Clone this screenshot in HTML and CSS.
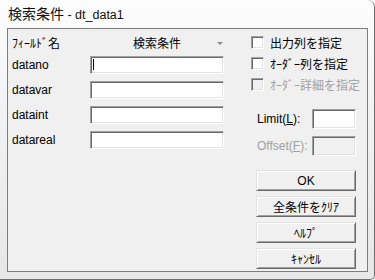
FILE: index.html
```html
<!DOCTYPE html>
<html>
<head>
  <title>検索条件</title>
  <link rel="stylesheet" href="styles.css">
</head>
<body>
  <div class="window">
    <div class="titlebar">検索条件<span class="title-sub"> - dt_data1</span></div>
    <div class="client">
      <div class="fields">
        <div class="fields-head">
          <span class="col-name">ﾌｨｰﾙﾄﾞ名</span>
          <span class="col-cond">検索条件</span>
          <span class="sort-arrow"></span>
        </div>
        <div class="field-row">
          <label>datano</label>
          <div class="edit"><span class="caret"></span></div>
        </div>
        <div class="field-row">
          <label>datavar</label>
          <div class="edit"></div>
        </div>
        <div class="field-row">
          <label>dataint</label>
          <div class="edit"></div>
        </div>
        <div class="field-row">
          <label>datareal</label>
          <div class="edit"></div>
        </div>
      </div>

      <div class="side">
        <div class="check-row">
          <span class="check"></span>出力列を指定
        </div>
        <div class="check-row">
          <span class="check"></span>ｵｰﾀﾞｰ列を指定
        </div>
        <div class="check-row disabled">
          <span class="check"></span>ｵｰﾀﾞｰ詳細を指定
        </div>

        <div class="num-row limit-row">
          <span class="num-label">Limit(<u>L</u>):</span>
          <div class="edit small"></div>
        </div>
        <div class="num-row disabled">
          <span class="num-label">Offset(<u>F</u>):</span>
          <div class="edit small"></div>
        </div>

        <div class="buttons">
          <button class="btn">OK</button>
          <button class="btn">全条件をｸﾘｱ</button>
          <button class="btn">ﾍﾙﾌﾟ</button>
          <button class="btn">ｷｬﾝｾﾙ</button>
        </div>
      </div>
    </div>
  </div>
</body>
</html>
```

FILE: styles.css
```css
body {
  margin: 0;
  font-family: "Liberation Sans", "Noto Sans CJK JP", sans-serif;
  font-size: 12px;
  color: #000;
  background: #fff;
}

.window {
  width: 375px;
  height: 280px;
  box-sizing: border-box;
  padding: 0 6px 7px 7px;
  background: linear-gradient(#fdfdfd, #f1f2f4 40%, #e6e7e9);
  border-right: 1px solid #6e6e6e;
  border-bottom: 1px solid #6e6e6e;
  border-top-right-radius: 7px;
  border-bottom-right-radius: 5px;
  display: flex;
  flex-direction: column;
}

.titlebar {
  height: 28px;
  line-height: 26px;
  padding-left: 1px;
  font-family: "Noto Sans CJK JP", sans-serif;
  font-size: 14px;
  color: #111;
}

.title-sub {
  font-family: "Liberation Sans", sans-serif;
  font-size: 12.5px;
}

.client {
  flex: 1;
  display: flex;
  background: #f0f0f0;
  border: 1px solid #7d7d7d;
  overflow: hidden;
}

/* 左側: フィールド一覧 */
.fields {
  width: 243px;
  padding-top: 6px;
}

.fields-head {
  display: flex;
  align-items: center;
  height: 14px;
  margin-bottom: 7px;
}

.col-name {
  margin-left: 4px;
  width: 121px;
}

.col-cond {
  width: 84px;
}

.sort-arrow {
  width: 0;
  height: 0;
  border-left: 3px solid transparent;
  border-right: 3px solid transparent;
  border-top: 3px solid #8a8a8a;
  margin-top: 2px;
}

.field-row {
  display: flex;
  align-items: center;
  height: 18px;
  margin-bottom: 7px;
}

.field-row label {
  width: 78px;
  margin-left: 4px;
}

.edit {
  position: relative;
  width: 134px;
  height: 18px;
  box-sizing: border-box;
  background: #fff;
  border: 1px solid;
  border-color: #a0a0a0 #fff #fff #a0a0a0;
  box-shadow: inset 1px 1px #696969, inset -1px -1px #e3e3e3;
}

.caret {
  position: absolute;
  left: 2px;
  top: 2px;
  width: 1px;
  height: 11px;
  background: #000;
}

/* 右側: オプションとボタン */
.side {
  width: 110px;
  padding-top: 3px;
}

.check-row {
  display: flex;
  align-items: center;
  height: 20px;
  margin-bottom: 1px;
}

.check {
  width: 13px;
  height: 13px;
  box-sizing: border-box;
  margin-right: 6px;
  background: #fff;
  border: 1px solid;
  border-color: #a0a0a0 #fff #fff #a0a0a0;
  box-shadow: inset 1px 1px #696969, inset -1px -1px #e3e3e3;
}

.disabled {
  color: #a0a0a0;
}

.disabled .check,
.disabled .edit {
  background: #f0f0f0;
}

.num-row {
  display: flex;
  align-items: center;
  height: 20px;
  margin-bottom: 7px;
}

.limit-row {
  margin-top: 15px;
}

.num-label {
  width: 55px;
  margin-left: 6px;
}

.edit.small {
  width: 44px;
  height: 20px;
}

.buttons {
  display: flex;
  flex-direction: column;
  gap: 5px;
  margin-top: 14px;
  margin-left: 5px;
}

.btn {
  width: 100px;
  height: 21px;
  padding: 0;
  font-family: inherit;
  font-size: 12px;
  color: #000;
  background: #f0f0f0;
  border: 1px solid;
  border-color: #e3e3e3 #696969 #696969 #e3e3e3;
  box-shadow: inset 1px 1px #fff, inset -1px -1px #a0a0a0;
  border-radius: 0;
}
```
